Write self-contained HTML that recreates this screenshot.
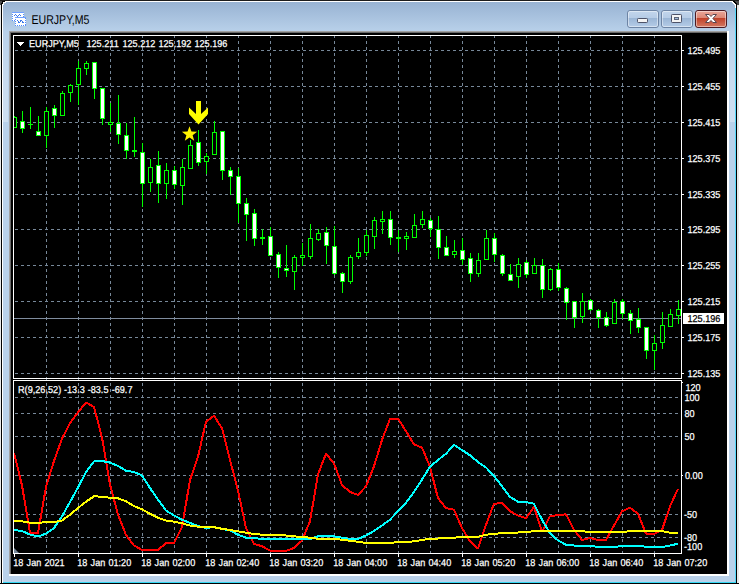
<!DOCTYPE html>
<html lang="en"><head><meta charset="utf-8"><title>EURJPY,M5</title>
<style>
html,body{margin:0;padding:0;background:#000;overflow:hidden}
svg{display:block;font-family:"Liberation Sans",sans-serif;text-rendering:geometricPrecision}
.c{shape-rendering:crispEdges}
</style></head><body>
<svg width="739" height="584" viewBox="0 0 739 584">
<defs>
<linearGradient id="tb" x1="0" y1="0" x2="0" y2="1"><stop offset="0" stop-color="#98b3d3"/><stop offset="1" stop-color="#b9d1ea"/></linearGradient>
<linearGradient id="bt" x1="0" y1="0" x2="0" y2="1"><stop offset="0" stop-color="#c3d6ec"/><stop offset="0.44" stop-color="#b6cce6"/><stop offset="0.44" stop-color="#9ab5d5"/><stop offset="1" stop-color="#b6cde8"/></linearGradient>
<linearGradient id="cl" x1="0" y1="0" x2="0" y2="1"><stop offset="0" stop-color="#eaa99c"/><stop offset="0.44" stop-color="#dc8674"/><stop offset="0.44" stop-color="#c03f27"/><stop offset="1" stop-color="#d47b65"/></linearGradient>
<linearGradient id="hl" x1="0" y1="0" x2="0" y2="1"><stop offset="0" stop-color="#fff" stop-opacity="0"/><stop offset="0.5" stop-color="#fff" stop-opacity="0.22"/><stop offset="1" stop-color="#fff" stop-opacity="0.3"/></linearGradient>
<clipPath id="cm"><rect x="14" y="36" width="667" height="342"/></clipPath>
<clipPath id="ci"><rect x="14" y="381" width="667" height="172"/></clipPath>
</defs>
<g class="c">
<rect x="0" y="0" width="739" height="584" fill="#e9e9e9"/>
<rect x="0" y="0" width="6" height="5" fill="#4a4a4a"/>
<rect x="733" y="0" width="6" height="5" fill="#4a4a4a"/>
<path d="M1 584 V6 Q1 0 7 0 H731 Q737 0 737 6 V584 Z" fill="#000"/>
<rect x="0" y="0" width="739" height="1" fill="#1c1c1c"/>
<path d="M2 583 V7 Q2 1 8 1 H730 Q736 1 736 7 V583 Z" fill="#fff"/>
<path d="M3 582 V8 Q3 2 9 2 H729 Q735 2 735 8 V582 Z" fill="#b9d1ea"/>
<path d="M3 32 V8 Q3 2 9 2 H729 Q735 2 735 8 V32 Z" fill="url(#tb)"/>
<rect x="735" y="8" width="1" height="575" fill="#55d8fa"/>
<rect x="3" y="582" width="733" height="1" fill="#35d8f4"/>
<rect x="0" y="583" width="739" height="1" fill="#000"/>
<rect x="3" y="32" width="5" height="90" fill="url(#hl)"/>
<rect x="730" y="32" width="5" height="90" fill="url(#hl)"/>
<rect x="9" y="31" width="720" height="545" fill="#fff"/>
<rect x="9" y="31" width="718" height="543" fill="#a0a0a0"/>
<rect x="10" y="32" width="717" height="542" fill="#696969"/>
<rect x="11" y="33" width="716" height="541" fill="#000"/>
</g>
<g class="c">
<rect x="12" y="12" width="12" height="9" fill="#fff"/>
<rect x="12.5" y="12.5" width="11" height="8" fill="none" stroke="#4f8bff" stroke-dasharray="1 1"/>
<rect x="12" y="12" width="12" height="1" fill="#6fa0ff"/>
<rect x="14" y="15" width="1" height="1" fill="#3c78e8"/>
<rect x="15" y="14" width="1" height="1" fill="#3c78e8"/>
<rect x="16" y="15" width="1" height="1" fill="#3c78e8"/>
<rect x="17" y="16" width="1" height="1" fill="#3c78e8"/>
<rect x="18" y="15" width="1" height="1" fill="#3c78e8"/>
<rect x="19" y="14" width="1" height="1" fill="#3c78e8"/>
<rect x="20" y="15" width="1" height="1" fill="#3c78e8"/>
<rect x="15" y="17" width="11" height="9" fill="#fff"/>
<rect x="15.5" y="17.5" width="10" height="8" fill="none" stroke="#4f8bff" stroke-dasharray="1 1"/>
<rect x="15" y="17" width="11" height="1" fill="#6fa0ff"/>
<rect x="17" y="20" width="1" height="1" fill="#3c78e8"/>
<rect x="18" y="21" width="1" height="2" fill="#3c78e8"/>
<rect x="19" y="22" width="1" height="1" fill="#3c78e8"/>
<rect x="20" y="20" width="1" height="2" fill="#3c78e8"/>
<rect x="21" y="20" width="1" height="1" fill="#3c78e8"/>
<rect x="22" y="21" width="1" height="2" fill="#3c78e8"/>
<rect x="23" y="22" width="1" height="1" fill="#3c78e8"/>
</g>
<text x="31.5" y="24" fill="#000" font-size="12.8" textLength="58" lengthAdjust="spacingAndGlyphs">EURJPY,M5</text>
<rect x="627.5" y="10.5" width="31" height="17" rx="2.5" fill="url(#bt)" stroke="#6d84a4"/>
<rect x="628.5" y="11.5" width="29" height="15" rx="1.5" fill="none" stroke="#fff" stroke-opacity="0.45"/>
<rect x="661.5" y="10.5" width="31" height="17" rx="2.5" fill="url(#bt)" stroke="#6d84a4"/>
<rect x="662.5" y="11.5" width="29" height="15" rx="1.5" fill="none" stroke="#fff" stroke-opacity="0.45"/>
<rect x="695.5" y="10.5" width="31" height="17" rx="2.5" fill="url(#cl)" stroke="#4b1a23"/>
<rect x="696.5" y="11.5" width="29" height="15" rx="1.5" fill="none" stroke="#fff" stroke-opacity="0.45"/>
<rect x="637.5" y="18.5" width="10" height="4" rx="0.8" fill="#f4f4f4" stroke="#4d5268"/>
<rect x="671.5" y="14.5" width="10" height="8" rx="0.8" fill="#f4f4f4" stroke="#4d5268"/>
<rect x="674.5" y="17.5" width="4" height="2" fill="#9fb9d8" stroke="#5d6478"/>
<path d="M705.5 14.5 h3.6 l1.9 2 l1.9 -2 h3.6 l-3.6 4 l3.6 4 h-3.6 l-1.9 -2 l-1.9 2 h-3.6 l3.6 -4 z" fill="#fff" stroke="#5a4750" stroke-width="1" stroke-linejoin="round"/>
<g class="c">
<line x1="14" y1="50.5" x2="681" y2="50.5" stroke="#778899" stroke-dasharray="3 3" stroke-dashoffset="5"/>
<rect x="682" y="50" width="2" height="1" fill="#fff"/>
<line x1="14" y1="86.5" x2="681" y2="86.5" stroke="#778899" stroke-dasharray="3 3" stroke-dashoffset="5"/>
<rect x="682" y="86" width="2" height="1" fill="#fff"/>
<line x1="14" y1="122.5" x2="681" y2="122.5" stroke="#778899" stroke-dasharray="3 3" stroke-dashoffset="5"/>
<rect x="682" y="122" width="2" height="1" fill="#fff"/>
<line x1="14" y1="158.5" x2="681" y2="158.5" stroke="#778899" stroke-dasharray="3 3" stroke-dashoffset="5"/>
<rect x="682" y="158" width="2" height="1" fill="#fff"/>
<line x1="14" y1="194.5" x2="681" y2="194.5" stroke="#778899" stroke-dasharray="3 3" stroke-dashoffset="5"/>
<rect x="682" y="194" width="2" height="1" fill="#fff"/>
<line x1="14" y1="229.5" x2="681" y2="229.5" stroke="#778899" stroke-dasharray="3 3" stroke-dashoffset="5"/>
<rect x="682" y="229" width="2" height="1" fill="#fff"/>
<line x1="14" y1="265.5" x2="681" y2="265.5" stroke="#778899" stroke-dasharray="3 3" stroke-dashoffset="5"/>
<rect x="682" y="265" width="2" height="1" fill="#fff"/>
<line x1="14" y1="301.5" x2="681" y2="301.5" stroke="#778899" stroke-dasharray="3 3" stroke-dashoffset="5"/>
<rect x="682" y="301" width="2" height="1" fill="#fff"/>
<line x1="14" y1="337.5" x2="681" y2="337.5" stroke="#778899" stroke-dasharray="3 3" stroke-dashoffset="5"/>
<rect x="682" y="337" width="2" height="1" fill="#fff"/>
<line x1="14" y1="373.5" x2="681" y2="373.5" stroke="#778899" stroke-dasharray="3 3" stroke-dashoffset="5"/>
<rect x="682" y="373" width="2" height="1" fill="#fff"/>
<line x1="14" y1="397.5" x2="681" y2="397.5" stroke="#778899" stroke-dasharray="3 3" stroke-dashoffset="5"/>
<line x1="14" y1="413.5" x2="681" y2="413.5" stroke="#778899" stroke-dasharray="3 3" stroke-dashoffset="5"/>
<line x1="14" y1="436.5" x2="681" y2="436.5" stroke="#778899" stroke-dasharray="3 3" stroke-dashoffset="5"/>
<line x1="14" y1="475.5" x2="681" y2="475.5" stroke="#778899" stroke-dasharray="3 3" stroke-dashoffset="5"/>
<line x1="14" y1="514.5" x2="681" y2="514.5" stroke="#778899" stroke-dasharray="3 3" stroke-dashoffset="5"/>
<line x1="14" y1="537.5" x2="681" y2="537.5" stroke="#778899" stroke-dasharray="3 3" stroke-dashoffset="5"/>
<rect x="682" y="475" width="1" height="1" fill="#fff"/>
<rect x="682" y="382" width="1" height="1" fill="#fff"/>
<line x1="46.5" y1="36" x2="46.5" y2="553" stroke="#778899" stroke-dasharray="3 3" stroke-dashoffset="1"/>
<line x1="78.5" y1="36" x2="78.5" y2="553" stroke="#778899" stroke-dasharray="3 3" stroke-dashoffset="1"/>
<line x1="110.5" y1="36" x2="110.5" y2="553" stroke="#778899" stroke-dasharray="3 3" stroke-dashoffset="1"/>
<line x1="142.5" y1="36" x2="142.5" y2="553" stroke="#778899" stroke-dasharray="3 3" stroke-dashoffset="1"/>
<line x1="174.5" y1="36" x2="174.5" y2="553" stroke="#778899" stroke-dasharray="3 3" stroke-dashoffset="1"/>
<line x1="206.5" y1="36" x2="206.5" y2="553" stroke="#778899" stroke-dasharray="3 3" stroke-dashoffset="1"/>
<line x1="238.5" y1="36" x2="238.5" y2="553" stroke="#778899" stroke-dasharray="3 3" stroke-dashoffset="1"/>
<line x1="270.5" y1="36" x2="270.5" y2="553" stroke="#778899" stroke-dasharray="3 3" stroke-dashoffset="1"/>
<line x1="302.5" y1="36" x2="302.5" y2="553" stroke="#778899" stroke-dasharray="3 3" stroke-dashoffset="1"/>
<line x1="334.5" y1="36" x2="334.5" y2="553" stroke="#778899" stroke-dasharray="3 3" stroke-dashoffset="1"/>
<line x1="366.5" y1="36" x2="366.5" y2="553" stroke="#778899" stroke-dasharray="3 3" stroke-dashoffset="1"/>
<line x1="398.5" y1="36" x2="398.5" y2="553" stroke="#778899" stroke-dasharray="3 3" stroke-dashoffset="1"/>
<line x1="430.5" y1="36" x2="430.5" y2="553" stroke="#778899" stroke-dasharray="3 3" stroke-dashoffset="1"/>
<line x1="462.5" y1="36" x2="462.5" y2="553" stroke="#778899" stroke-dasharray="3 3" stroke-dashoffset="1"/>
<line x1="494.5" y1="36" x2="494.5" y2="553" stroke="#778899" stroke-dasharray="3 3" stroke-dashoffset="1"/>
<line x1="526.5" y1="36" x2="526.5" y2="553" stroke="#778899" stroke-dasharray="3 3" stroke-dashoffset="1"/>
<line x1="558.5" y1="36" x2="558.5" y2="553" stroke="#778899" stroke-dasharray="3 3" stroke-dashoffset="1"/>
<line x1="590.5" y1="36" x2="590.5" y2="553" stroke="#778899" stroke-dasharray="3 3" stroke-dashoffset="1"/>
<line x1="622.5" y1="36" x2="622.5" y2="553" stroke="#778899" stroke-dasharray="3 3" stroke-dashoffset="1"/>
<line x1="654.5" y1="36" x2="654.5" y2="553" stroke="#778899" stroke-dasharray="3 3" stroke-dashoffset="1"/>
<rect x="13.5" y="35.5" width="668" height="343" fill="none" stroke="#fff"/>
<rect x="13.5" y="380.5" width="668" height="173" fill="none" stroke="#fff"/>
<rect x="14" y="554" width="1" height="3" fill="#fff"/>
<rect x="78" y="554" width="1" height="3" fill="#fff"/>
<rect x="142" y="554" width="1" height="3" fill="#fff"/>
<rect x="206" y="554" width="1" height="3" fill="#fff"/>
<rect x="270" y="554" width="1" height="3" fill="#fff"/>
<rect x="334" y="554" width="1" height="3" fill="#fff"/>
<rect x="398" y="554" width="1" height="3" fill="#fff"/>
<rect x="462" y="554" width="1" height="3" fill="#fff"/>
<rect x="526" y="554" width="1" height="3" fill="#fff"/>
<rect x="590" y="554" width="1" height="3" fill="#fff"/>
<rect x="654" y="554" width="1" height="3" fill="#fff"/>
<line x1="14" y1="318.5" x2="681" y2="318.5" stroke="#7f8c9e"/>
</g>
<g class="c" clip-path="url(#cm)">
<rect x="14" y="116" width="1" height="12" fill="#00ff00"/>
<rect x="12" y="117" width="5" height="11" fill="#00ff00"/>
<rect x="13" y="118" width="3" height="9" fill="#000"/>
<rect x="22" y="111" width="1" height="22" fill="#00ff00"/>
<rect x="20" y="121" width="5" height="8" fill="#00ff00"/>
<rect x="21" y="122" width="3" height="6" fill="#fff"/>
<rect x="30" y="107" width="1" height="22" fill="#00ff00"/>
<rect x="28" y="124" width="5" height="1" fill="#00ff00"/>
<rect x="38" y="116" width="1" height="20" fill="#00ff00"/>
<rect x="36" y="131" width="5" height="5" fill="#00ff00"/>
<rect x="37" y="132" width="3" height="3" fill="#fff"/>
<rect x="46" y="107" width="1" height="41" fill="#00ff00"/>
<rect x="44" y="111" width="5" height="25" fill="#00ff00"/>
<rect x="45" y="112" width="3" height="23" fill="#000"/>
<rect x="54" y="105" width="1" height="23" fill="#00ff00"/>
<rect x="52" y="108" width="5" height="8" fill="#00ff00"/>
<rect x="53" y="109" width="3" height="6" fill="#fff"/>
<rect x="62" y="91" width="1" height="25" fill="#00ff00"/>
<rect x="60" y="93" width="5" height="23" fill="#00ff00"/>
<rect x="61" y="94" width="3" height="21" fill="#000"/>
<rect x="70" y="84" width="1" height="18" fill="#00ff00"/>
<rect x="68" y="85" width="5" height="8" fill="#00ff00"/>
<rect x="69" y="86" width="3" height="6" fill="#000"/>
<rect x="78" y="61" width="1" height="44" fill="#00ff00"/>
<rect x="76" y="68" width="5" height="17" fill="#00ff00"/>
<rect x="77" y="69" width="3" height="15" fill="#000"/>
<rect x="86" y="61" width="1" height="14" fill="#00ff00"/>
<rect x="84" y="63" width="5" height="6" fill="#00ff00"/>
<rect x="85" y="64" width="3" height="4" fill="#000"/>
<rect x="94" y="62" width="1" height="37" fill="#00ff00"/>
<rect x="92" y="62" width="5" height="27" fill="#00ff00"/>
<rect x="93" y="63" width="3" height="25" fill="#fff"/>
<rect x="102" y="88" width="1" height="37" fill="#00ff00"/>
<rect x="100" y="88" width="5" height="31" fill="#00ff00"/>
<rect x="101" y="89" width="3" height="29" fill="#fff"/>
<rect x="110" y="103" width="1" height="29" fill="#00ff00"/>
<rect x="108" y="122" width="5" height="3" fill="#00ff00"/>
<rect x="109" y="123" width="3" height="1" fill="#000"/>
<rect x="118" y="95" width="1" height="49" fill="#00ff00"/>
<rect x="116" y="123" width="5" height="12" fill="#00ff00"/>
<rect x="117" y="124" width="3" height="10" fill="#fff"/>
<rect x="126" y="123" width="1" height="36" fill="#00ff00"/>
<rect x="124" y="135" width="5" height="16" fill="#00ff00"/>
<rect x="125" y="136" width="3" height="14" fill="#fff"/>
<rect x="134" y="117" width="1" height="40" fill="#00ff00"/>
<rect x="132" y="150" width="5" height="2" fill="#00ff00"/>
<rect x="142" y="143" width="1" height="64" fill="#00ff00"/>
<rect x="140" y="152" width="5" height="32" fill="#00ff00"/>
<rect x="141" y="153" width="3" height="30" fill="#fff"/>
<rect x="150" y="159" width="1" height="33" fill="#00ff00"/>
<rect x="148" y="167" width="5" height="16" fill="#00ff00"/>
<rect x="149" y="168" width="3" height="14" fill="#000"/>
<rect x="158" y="151" width="1" height="52" fill="#00ff00"/>
<rect x="156" y="165" width="5" height="19" fill="#00ff00"/>
<rect x="157" y="166" width="3" height="17" fill="#fff"/>
<rect x="166" y="163" width="1" height="36" fill="#00ff00"/>
<rect x="164" y="170" width="5" height="14" fill="#00ff00"/>
<rect x="165" y="171" width="3" height="12" fill="#000"/>
<rect x="174" y="166" width="1" height="23" fill="#00ff00"/>
<rect x="172" y="170" width="5" height="15" fill="#00ff00"/>
<rect x="173" y="171" width="3" height="13" fill="#fff"/>
<rect x="182" y="159" width="1" height="46" fill="#00ff00"/>
<rect x="180" y="167" width="5" height="19" fill="#00ff00"/>
<rect x="181" y="168" width="3" height="17" fill="#000"/>
<rect x="190" y="140" width="1" height="29" fill="#00ff00"/>
<rect x="188" y="145" width="5" height="24" fill="#00ff00"/>
<rect x="189" y="146" width="3" height="22" fill="#000"/>
<rect x="198" y="130" width="1" height="36" fill="#00ff00"/>
<rect x="196" y="142" width="5" height="21" fill="#00ff00"/>
<rect x="197" y="143" width="3" height="19" fill="#fff"/>
<rect x="206" y="153" width="1" height="21" fill="#00ff00"/>
<rect x="204" y="156" width="5" height="6" fill="#00ff00"/>
<rect x="205" y="157" width="3" height="4" fill="#000"/>
<rect x="214" y="121" width="1" height="34" fill="#00ff00"/>
<rect x="212" y="132" width="5" height="23" fill="#00ff00"/>
<rect x="213" y="133" width="3" height="21" fill="#000"/>
<rect x="222" y="131" width="1" height="49" fill="#00ff00"/>
<rect x="220" y="131" width="5" height="40" fill="#00ff00"/>
<rect x="221" y="132" width="3" height="38" fill="#fff"/>
<rect x="230" y="167" width="1" height="28" fill="#00ff00"/>
<rect x="228" y="170" width="5" height="7" fill="#00ff00"/>
<rect x="229" y="171" width="3" height="5" fill="#fff"/>
<rect x="238" y="168" width="1" height="55" fill="#00ff00"/>
<rect x="236" y="176" width="5" height="28" fill="#00ff00"/>
<rect x="237" y="177" width="3" height="26" fill="#fff"/>
<rect x="246" y="198" width="1" height="43" fill="#00ff00"/>
<rect x="244" y="203" width="5" height="12" fill="#00ff00"/>
<rect x="245" y="204" width="3" height="10" fill="#fff"/>
<rect x="254" y="209" width="1" height="37" fill="#00ff00"/>
<rect x="252" y="213" width="5" height="26" fill="#00ff00"/>
<rect x="253" y="214" width="3" height="24" fill="#fff"/>
<rect x="262" y="229" width="1" height="16" fill="#00ff00"/>
<rect x="260" y="237" width="5" height="2" fill="#00ff00"/>
<rect x="270" y="227" width="1" height="29" fill="#00ff00"/>
<rect x="268" y="236" width="5" height="20" fill="#00ff00"/>
<rect x="269" y="237" width="3" height="18" fill="#fff"/>
<rect x="278" y="252" width="1" height="26" fill="#00ff00"/>
<rect x="276" y="254" width="5" height="14" fill="#00ff00"/>
<rect x="277" y="255" width="3" height="12" fill="#fff"/>
<rect x="286" y="245" width="1" height="32" fill="#00ff00"/>
<rect x="284" y="268" width="5" height="3" fill="#00ff00"/>
<rect x="285" y="269" width="3" height="1" fill="#fff"/>
<rect x="294" y="255" width="1" height="35" fill="#00ff00"/>
<rect x="292" y="257" width="5" height="15" fill="#00ff00"/>
<rect x="293" y="258" width="3" height="13" fill="#000"/>
<rect x="302" y="243" width="1" height="23" fill="#00ff00"/>
<rect x="300" y="255" width="5" height="3" fill="#00ff00"/>
<rect x="301" y="256" width="3" height="1" fill="#000"/>
<rect x="310" y="224" width="1" height="35" fill="#00ff00"/>
<rect x="308" y="238" width="5" height="19" fill="#00ff00"/>
<rect x="309" y="239" width="3" height="17" fill="#000"/>
<rect x="318" y="229" width="1" height="12" fill="#00ff00"/>
<rect x="316" y="233" width="5" height="7" fill="#00ff00"/>
<rect x="317" y="234" width="3" height="5" fill="#000"/>
<rect x="326" y="227" width="1" height="37" fill="#00ff00"/>
<rect x="324" y="232" width="5" height="14" fill="#00ff00"/>
<rect x="325" y="233" width="3" height="12" fill="#fff"/>
<rect x="334" y="226" width="1" height="49" fill="#00ff00"/>
<rect x="332" y="246" width="5" height="28" fill="#00ff00"/>
<rect x="333" y="247" width="3" height="26" fill="#fff"/>
<rect x="342" y="272" width="1" height="21" fill="#00ff00"/>
<rect x="340" y="273" width="5" height="9" fill="#00ff00"/>
<rect x="341" y="274" width="3" height="7" fill="#fff"/>
<rect x="350" y="255" width="1" height="29" fill="#00ff00"/>
<rect x="348" y="257" width="5" height="25" fill="#00ff00"/>
<rect x="349" y="258" width="3" height="23" fill="#000"/>
<rect x="358" y="238" width="1" height="21" fill="#00ff00"/>
<rect x="356" y="252" width="5" height="5" fill="#00ff00"/>
<rect x="357" y="253" width="3" height="3" fill="#000"/>
<rect x="366" y="230" width="1" height="26" fill="#00ff00"/>
<rect x="364" y="235" width="5" height="18" fill="#00ff00"/>
<rect x="365" y="236" width="3" height="16" fill="#000"/>
<rect x="374" y="217" width="1" height="32" fill="#00ff00"/>
<rect x="372" y="220" width="5" height="17" fill="#00ff00"/>
<rect x="373" y="221" width="3" height="15" fill="#000"/>
<rect x="382" y="211" width="1" height="23" fill="#00ff00"/>
<rect x="380" y="219" width="5" height="3" fill="#00ff00"/>
<rect x="381" y="220" width="3" height="1" fill="#000"/>
<rect x="390" y="211" width="1" height="34" fill="#00ff00"/>
<rect x="388" y="219" width="5" height="19" fill="#00ff00"/>
<rect x="389" y="220" width="3" height="17" fill="#fff"/>
<rect x="398" y="230" width="1" height="22" fill="#00ff00"/>
<rect x="396" y="237" width="5" height="2" fill="#00ff00"/>
<rect x="406" y="232" width="1" height="18" fill="#00ff00"/>
<rect x="404" y="236" width="5" height="3" fill="#00ff00"/>
<rect x="405" y="237" width="3" height="1" fill="#000"/>
<rect x="414" y="214" width="1" height="24" fill="#00ff00"/>
<rect x="412" y="225" width="5" height="13" fill="#00ff00"/>
<rect x="413" y="226" width="3" height="11" fill="#000"/>
<rect x="422" y="211" width="1" height="17" fill="#00ff00"/>
<rect x="420" y="219" width="5" height="6" fill="#00ff00"/>
<rect x="421" y="220" width="3" height="4" fill="#000"/>
<rect x="430" y="218" width="1" height="19" fill="#00ff00"/>
<rect x="428" y="220" width="5" height="9" fill="#00ff00"/>
<rect x="429" y="221" width="3" height="7" fill="#fff"/>
<rect x="438" y="216" width="1" height="43" fill="#00ff00"/>
<rect x="436" y="229" width="5" height="19" fill="#00ff00"/>
<rect x="437" y="230" width="3" height="17" fill="#fff"/>
<rect x="446" y="236" width="1" height="20" fill="#00ff00"/>
<rect x="444" y="247" width="5" height="9" fill="#00ff00"/>
<rect x="445" y="248" width="3" height="7" fill="#fff"/>
<rect x="454" y="240" width="1" height="18" fill="#00ff00"/>
<rect x="452" y="251" width="5" height="4" fill="#00ff00"/>
<rect x="453" y="252" width="3" height="2" fill="#000"/>
<rect x="462" y="238" width="1" height="27" fill="#00ff00"/>
<rect x="460" y="250" width="5" height="10" fill="#00ff00"/>
<rect x="461" y="251" width="3" height="8" fill="#fff"/>
<rect x="470" y="253" width="1" height="29" fill="#00ff00"/>
<rect x="468" y="258" width="5" height="16" fill="#00ff00"/>
<rect x="469" y="259" width="3" height="14" fill="#fff"/>
<rect x="478" y="253" width="1" height="24" fill="#00ff00"/>
<rect x="476" y="260" width="5" height="14" fill="#00ff00"/>
<rect x="477" y="261" width="3" height="12" fill="#000"/>
<rect x="486" y="230" width="1" height="30" fill="#00ff00"/>
<rect x="484" y="238" width="5" height="22" fill="#00ff00"/>
<rect x="485" y="239" width="3" height="20" fill="#000"/>
<rect x="494" y="233" width="1" height="29" fill="#00ff00"/>
<rect x="492" y="238" width="5" height="17" fill="#00ff00"/>
<rect x="493" y="239" width="3" height="15" fill="#fff"/>
<rect x="502" y="254" width="1" height="22" fill="#00ff00"/>
<rect x="500" y="255" width="5" height="19" fill="#00ff00"/>
<rect x="501" y="256" width="3" height="17" fill="#fff"/>
<rect x="510" y="264" width="1" height="17" fill="#00ff00"/>
<rect x="508" y="274" width="5" height="7" fill="#00ff00"/>
<rect x="509" y="275" width="3" height="5" fill="#fff"/>
<rect x="518" y="258" width="1" height="30" fill="#00ff00"/>
<rect x="516" y="264" width="5" height="13" fill="#00ff00"/>
<rect x="517" y="265" width="3" height="11" fill="#000"/>
<rect x="526" y="260" width="1" height="18" fill="#00ff00"/>
<rect x="524" y="262" width="5" height="13" fill="#00ff00"/>
<rect x="525" y="263" width="3" height="11" fill="#fff"/>
<rect x="534" y="258" width="1" height="16" fill="#00ff00"/>
<rect x="532" y="265" width="5" height="9" fill="#00ff00"/>
<rect x="533" y="266" width="3" height="7" fill="#000"/>
<rect x="542" y="259" width="1" height="39" fill="#00ff00"/>
<rect x="540" y="265" width="5" height="25" fill="#00ff00"/>
<rect x="541" y="266" width="3" height="23" fill="#fff"/>
<rect x="550" y="268" width="1" height="23" fill="#00ff00"/>
<rect x="548" y="269" width="5" height="21" fill="#00ff00"/>
<rect x="549" y="270" width="3" height="19" fill="#000"/>
<rect x="558" y="263" width="1" height="28" fill="#00ff00"/>
<rect x="556" y="269" width="5" height="19" fill="#00ff00"/>
<rect x="557" y="270" width="3" height="17" fill="#fff"/>
<rect x="566" y="287" width="1" height="33" fill="#00ff00"/>
<rect x="564" y="288" width="5" height="15" fill="#00ff00"/>
<rect x="565" y="289" width="3" height="13" fill="#fff"/>
<rect x="574" y="301" width="1" height="27" fill="#00ff00"/>
<rect x="572" y="301" width="5" height="17" fill="#00ff00"/>
<rect x="573" y="302" width="3" height="15" fill="#fff"/>
<rect x="582" y="293" width="1" height="30" fill="#00ff00"/>
<rect x="580" y="301" width="5" height="16" fill="#00ff00"/>
<rect x="581" y="302" width="3" height="14" fill="#000"/>
<rect x="590" y="299" width="1" height="12" fill="#00ff00"/>
<rect x="588" y="300" width="5" height="10" fill="#00ff00"/>
<rect x="589" y="301" width="3" height="8" fill="#fff"/>
<rect x="598" y="309" width="1" height="19" fill="#00ff00"/>
<rect x="596" y="310" width="5" height="8" fill="#00ff00"/>
<rect x="597" y="311" width="3" height="6" fill="#fff"/>
<rect x="606" y="312" width="1" height="15" fill="#00ff00"/>
<rect x="604" y="317" width="5" height="9" fill="#00ff00"/>
<rect x="605" y="318" width="3" height="7" fill="#fff"/>
<rect x="614" y="299" width="1" height="25" fill="#00ff00"/>
<rect x="612" y="302" width="5" height="22" fill="#00ff00"/>
<rect x="613" y="303" width="3" height="20" fill="#000"/>
<rect x="622" y="299" width="1" height="20" fill="#00ff00"/>
<rect x="620" y="301" width="5" height="13" fill="#00ff00"/>
<rect x="621" y="302" width="3" height="11" fill="#fff"/>
<rect x="630" y="310" width="1" height="24" fill="#00ff00"/>
<rect x="628" y="313" width="5" height="8" fill="#00ff00"/>
<rect x="629" y="314" width="3" height="6" fill="#fff"/>
<rect x="638" y="308" width="1" height="25" fill="#00ff00"/>
<rect x="636" y="319" width="5" height="9" fill="#00ff00"/>
<rect x="637" y="320" width="3" height="7" fill="#fff"/>
<rect x="646" y="327" width="1" height="32" fill="#00ff00"/>
<rect x="644" y="327" width="5" height="24" fill="#00ff00"/>
<rect x="645" y="328" width="3" height="22" fill="#fff"/>
<rect x="654" y="335" width="1" height="35" fill="#00ff00"/>
<rect x="652" y="343" width="5" height="8" fill="#00ff00"/>
<rect x="653" y="344" width="3" height="6" fill="#000"/>
<rect x="662" y="312" width="1" height="37" fill="#00ff00"/>
<rect x="660" y="325" width="5" height="18" fill="#00ff00"/>
<rect x="661" y="326" width="3" height="16" fill="#000"/>
<rect x="670" y="309" width="1" height="18" fill="#00ff00"/>
<rect x="668" y="314" width="5" height="13" fill="#00ff00"/>
<rect x="669" y="315" width="3" height="11" fill="#000"/>
<rect x="678" y="300" width="1" height="24" fill="#00ff00"/>
<rect x="676" y="309" width="5" height="7" fill="#00ff00"/>
<rect x="677" y="310" width="3" height="5" fill="#000"/>
</g>
<path d="M196 101 H201 V114 L208 107.5 V114 L198.5 124.5 L189 114 V107.5 L196 114 Z" fill="#ffff00"/>
<polygon points="189.50,126.20 191.44,131.53 197.11,131.73 192.64,135.22 194.20,140.67 189.50,137.50 184.80,140.67 186.36,135.22 181.89,131.73 187.56,131.53" fill="#fff200"/>
<g class="c" clip-path="url(#ci)">
<polyline points="14,453 22,485.5 30,533 38,533 46,487 54,461 62,438.6 70,423.2 78,412.2 86,402.5 94,407 102,437.5 110,484.5 118,514.7 126,535 134,545.5 142,550 150,550 158,549.7 166,543.3 174,543 182,527 190,480 198,456.7 206,421.7 214,415.8 222,428.3 230,460 238,490.5 246,528 254,543.8 262,546.3 270,550.5 278,551 286,551 294,548 302,540.5 310,521.3 318,474.3 326,453.7 334,463.5 342,485 350,492 358,495 366,486.3 374,466.2 382,440 390,418.8 398,418.7 406,431.2 414,444.5 422,447.5 430,466.8 438,498.2 446,508 454,509.7 462,528 470,541.3 478,548.8 486,524.7 494,503.8 502,503 510,511.3 518,515.5 526,518.3 534,507 542,531.7 550,516.3 558,515 566,514.3 574,529.7 582,540 590,538 598,540 606,540 614,525.5 622,511.3 630,507.7 638,513.8 646,533.8 654,534 662,530 670,506.3 678,488.8" fill="none" stroke="#ff0000" stroke-width="2" stroke-linejoin="bevel"/>
<polyline points="14,530 22,531 30,534.6 38,536.6 46,533.6 54,528 62,516.3 70,502 78,487.5 86,472 94,461.3 102,461 110,462.6 118,466 126,470.7 134,472 142,475.5 150,488 158,499.7 166,510.5 174,515.5 182,519.7 190,523 198,526 206,528 214,527 222,529 230,530.5 238,534.7 246,537.7 254,538 262,539 270,539 278,539 286,539 294,539 302,539 310,539 318,536.3 326,536 334,536.3 342,537.7 350,539 358,539 366,535.5 374,531 382,525.5 390,519.7 398,511.3 406,502.6 414,492 422,479.5 430,466.8 438,460 446,453.7 454,445 462,450 470,455.3 478,462 486,467.5 494,476 502,486.3 510,497 518,501.7 526,502 534,503.8 542,519.7 550,533.3 558,540.5 566,544.7 574,545.5 582,545.8 590,546 598,546.8 606,547 614,547 622,546 630,546 638,546 646,546.7 654,547 662,547 670,545.5 678,543.7" fill="none" stroke="#00ffff" stroke-width="2" stroke-linejoin="bevel"/>
<polyline points="14,521.3 22,521.3 30,522.7 38,523 46,522 54,522 62,520.5 70,514.7 78,508 86,501.7 94,496.3 102,496.7 110,497.7 118,498.3 126,501.3 134,506 142,509.3 150,513.8 158,517.7 166,520.5 174,521.7 182,523.3 190,525.5 198,526.7 206,526.7 214,527.2 222,528.8 230,530 238,531.3 246,532.7 254,534 262,534.7 270,535 278,535 286,535.5 294,536.3 302,537 310,537.7 318,538.8 326,539 334,539 342,539.7 350,540.8 358,541.7 366,543 374,543.3 382,543.3 390,543 398,542 406,542 414,541.3 422,540 430,538.5 438,538.5 446,538.3 454,537.7 462,537 470,537 478,536.7 486,534.7 494,534 502,533 510,533 518,532.5 526,531.8 534,531.3 542,531 550,531 558,531 566,531 574,531 582,531.3 590,531.8 598,531.8 606,531.8 614,531.8 622,531.8 630,531.3 638,530.8 646,530.8 654,530.8 662,531 670,532.7 678,533" fill="none" stroke="#ffff00" stroke-width="2" stroke-linejoin="bevel"/>
</g>
<path d="M14 548 L19 553 H14 Z" fill="#778899"/>
<g class="c">
<rect x="17" y="42" width="7" height="1" fill="#fff"/>
<rect x="18" y="43" width="5" height="1" fill="#fff"/>
<rect x="19" y="44" width="3" height="1" fill="#fff"/>
<rect x="20" y="45" width="1" height="1" fill="#fff"/>
</g>
<text transform="translate(29,47) scale(0.91,1)" fill="#fff" stroke="#fff" stroke-width="0.25" font-size="10">EURJPY,M5</text>
<text transform="translate(86.5,47) scale(0.91,1)" fill="#fff" stroke="#fff" stroke-width="0.25" font-size="10">125.211</text>
<text transform="translate(122.5,47) scale(0.91,1)" fill="#fff" stroke="#fff" stroke-width="0.25" font-size="10">125.212</text>
<text transform="translate(158.5,47) scale(0.91,1)" fill="#fff" stroke="#fff" stroke-width="0.25" font-size="10">125.192</text>
<text transform="translate(194.5,47) scale(0.91,1)" fill="#fff" stroke="#fff" stroke-width="0.25" font-size="10">125.196</text>
<text transform="translate(18,393) scale(0.915,1)" fill="#fff" stroke="#fff" stroke-width="0.25" font-size="10">R(9,26,52)</text>
<text transform="translate(64,393) scale(0.91,1)" fill="#fff" stroke="#fff" stroke-width="0.25" font-size="10">-13.3</text>
<text transform="translate(87.7,393) scale(0.91,1)" fill="#fff" stroke="#fff" stroke-width="0.25" font-size="10">-83.5</text>
<text transform="translate(111.7,393) scale(0.91,1)" fill="#fff" stroke="#fff" stroke-width="0.25" font-size="10">-69.7</text>
<text transform="translate(687.5,54) scale(0.91,1)" fill="#fff" stroke="#fff" stroke-width="0.25" font-size="10">125.495</text>
<text transform="translate(687.5,90) scale(0.91,1)" fill="#fff" stroke="#fff" stroke-width="0.25" font-size="10">125.455</text>
<text transform="translate(687.5,126) scale(0.91,1)" fill="#fff" stroke="#fff" stroke-width="0.25" font-size="10">125.415</text>
<text transform="translate(687.5,162) scale(0.91,1)" fill="#fff" stroke="#fff" stroke-width="0.25" font-size="10">125.375</text>
<text transform="translate(687.5,198) scale(0.91,1)" fill="#fff" stroke="#fff" stroke-width="0.25" font-size="10">125.335</text>
<text transform="translate(687.5,233) scale(0.91,1)" fill="#fff" stroke="#fff" stroke-width="0.25" font-size="10">125.295</text>
<text transform="translate(687.5,269) scale(0.91,1)" fill="#fff" stroke="#fff" stroke-width="0.25" font-size="10">125.255</text>
<text transform="translate(687.5,305) scale(0.91,1)" fill="#fff" stroke="#fff" stroke-width="0.25" font-size="10">125.215</text>
<text transform="translate(687.5,341) scale(0.91,1)" fill="#fff" stroke="#fff" stroke-width="0.25" font-size="10">125.175</text>
<text transform="translate(687.5,377) scale(0.91,1)" fill="#fff" stroke="#fff" stroke-width="0.25" font-size="10">125.135</text>
<rect class="c" x="683" y="313" width="41" height="11" fill="#fff"/>
<text transform="translate(687.5,322) scale(0.91,1)" fill="#000" stroke="#000" stroke-width="0.25" font-size="10">125.196</text>
<text transform="translate(685.5,391) scale(0.91,1)" fill="#fff" stroke="#fff" stroke-width="0.25" font-size="10">120</text>
<text transform="translate(684.5,401) scale(0.91,1)" fill="#fff" stroke="#fff" stroke-width="0.25" font-size="10">100</text>
<text transform="translate(684.5,417) scale(0.91,1)" fill="#fff" stroke="#fff" stroke-width="0.25" font-size="10">80</text>
<text transform="translate(684.5,440) scale(0.91,1)" fill="#fff" stroke="#fff" stroke-width="0.25" font-size="10">50</text>
<text transform="translate(685,479) scale(0.91,1)" fill="#fff" stroke="#fff" stroke-width="0.25" font-size="10">0.00</text>
<text transform="translate(684,518) scale(0.91,1)" fill="#fff" stroke="#fff" stroke-width="0.25" font-size="10">-50</text>
<text transform="translate(684,541) scale(0.91,1)" fill="#fff" stroke="#fff" stroke-width="0.25" font-size="10">-80</text>
<text transform="translate(684,550) scale(0.91,1)" fill="#fff" stroke="#fff" stroke-width="0.25" font-size="10">-100</text>
<text transform="translate(13.3,566) scale(0.91,1)" fill="#fff" stroke="#fff" stroke-width="0.25" font-size="10" word-spacing="0.7">18 Jan 2021</text>
<text transform="translate(77.3,566) scale(0.91,1)" fill="#fff" stroke="#fff" stroke-width="0.25" font-size="10" word-spacing="0.7">18 Jan 01:20</text>
<text transform="translate(141.3,566) scale(0.91,1)" fill="#fff" stroke="#fff" stroke-width="0.25" font-size="10" word-spacing="0.7">18 Jan 02:00</text>
<text transform="translate(205.3,566) scale(0.91,1)" fill="#fff" stroke="#fff" stroke-width="0.25" font-size="10" word-spacing="0.7">18 Jan 02:40</text>
<text transform="translate(269.3,566) scale(0.91,1)" fill="#fff" stroke="#fff" stroke-width="0.25" font-size="10" word-spacing="0.7">18 Jan 03:20</text>
<text transform="translate(333.3,566) scale(0.91,1)" fill="#fff" stroke="#fff" stroke-width="0.25" font-size="10" word-spacing="0.7">18 Jan 04:00</text>
<text transform="translate(397.3,566) scale(0.91,1)" fill="#fff" stroke="#fff" stroke-width="0.25" font-size="10" word-spacing="0.7">18 Jan 04:40</text>
<text transform="translate(461.3,566) scale(0.91,1)" fill="#fff" stroke="#fff" stroke-width="0.25" font-size="10" word-spacing="0.7">18 Jan 05:20</text>
<text transform="translate(525.3,566) scale(0.91,1)" fill="#fff" stroke="#fff" stroke-width="0.25" font-size="10" word-spacing="0.7">18 Jan 06:00</text>
<text transform="translate(589.3,566) scale(0.91,1)" fill="#fff" stroke="#fff" stroke-width="0.25" font-size="10" word-spacing="0.7">18 Jan 06:40</text>
<text transform="translate(653.3,566) scale(0.91,1)" fill="#fff" stroke="#fff" stroke-width="0.25" font-size="10" word-spacing="0.7">18 Jan 07:20</text>
</svg></body></html>
